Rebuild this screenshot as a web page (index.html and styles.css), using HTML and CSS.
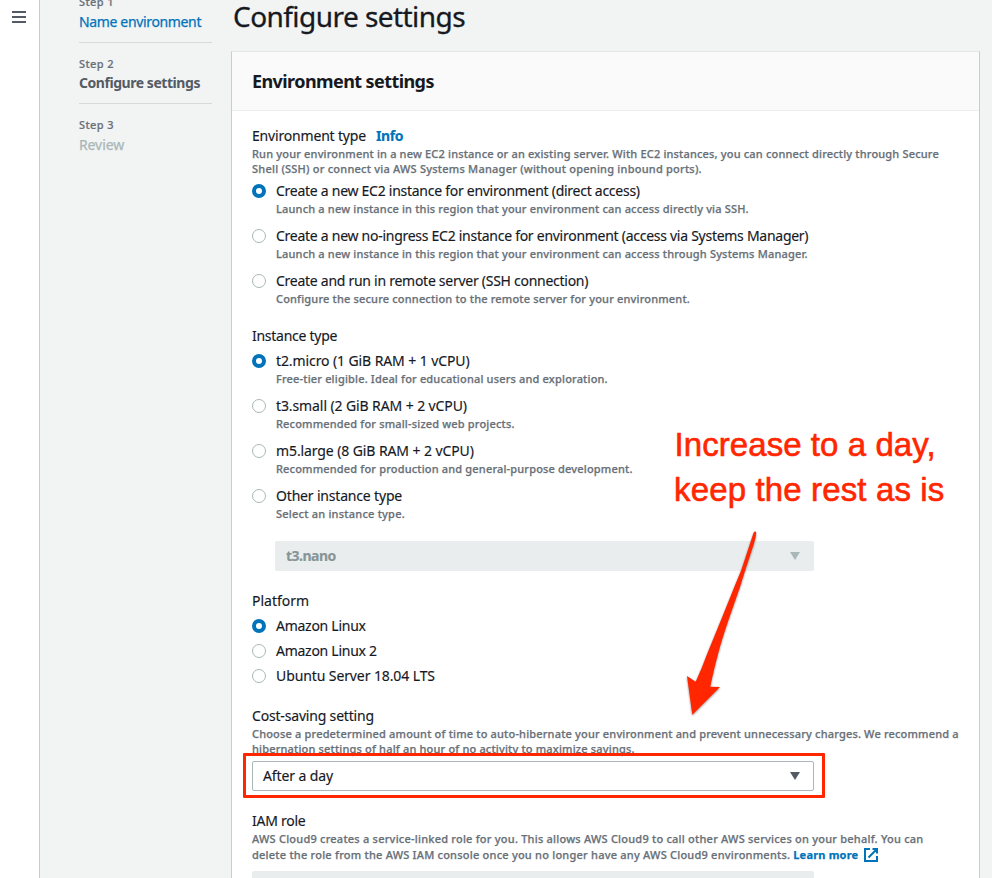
FILE: index.html
```
<!DOCTYPE html>
<html lang="en">
<head>
<meta charset="utf-8">
<title>Configure settings</title>
<link rel="stylesheet" href="styles.css">
</head>
<body>
<div class="app">
  <aside class="rail">
    <svg class="menu" width="14" height="12" viewBox="0 0 14 12"><path d="M0 1h14M0 6h14M0 11h14" stroke="#545b64" stroke-width="2"/></svg>
  </aside>
  <nav class="steps">
    <div class="step"><div class="step-no">Step 1</div><div class="step-name link">Name environment</div></div>
    <div class="step"><div class="step-no">Step 2</div><div class="step-name current">Configure settings</div></div>
    <div class="step"><div class="step-no">Step 3</div><div class="step-name future">Review</div></div>
  </nav>
  <main class="main">
    <h1 class="title">Configure settings</h1>
    <section class="card">
      <header class="card-head"><h2>Environment settings</h2></header>
      <div class="card-body">
        <div class="group">
          <div class="label">Environment type<a class="info">Info</a></div>
          <div class="desc">Run your environment in a new EC2 instance or an existing server. With EC2 instances, you can connect directly through Secure<br><span class="wide">Shell (SSH) or connect via AWS Systems Manager (without opening inbound ports).</span></div>
          <div class="options">
            <div class="option"><i class="radio on"></i><div><div class="label tight">Create a new EC2 instance for environment (direct access)</div><div class="desc">Launch a new instance in this region that your environment can access directly via SSH.</div></div></div>
            <div class="option"><i class="radio"></i><div><div class="label tight">Create a new no-ingress EC2 instance for environment (access via Systems Manager)</div><div class="desc">Launch a new instance in this region that your environment can access through Systems Manager.</div></div></div>
            <div class="option"><i class="radio"></i><div><div class="label tight">Create and run in remote server (SSH connection)</div><div class="desc">Configure the secure connection to the remote server for your environment.</div></div></div>
          </div>
        </div>
        <div class="group">
          <div class="label tight">Instance type</div>
          <div class="options">
            <div class="option"><i class="radio on"></i><div><div class="label spec">t2.micro (1 GiB RAM + 1 vCPU)</div><div class="desc">Free-tier eligible. Ideal for educational users and exploration.</div></div></div>
            <div class="option"><i class="radio"></i><div><div class="label spec">t3.small (2 GiB RAM + 2 vCPU)</div><div class="desc">Recommended for small-sized web projects.</div></div></div>
            <div class="option"><i class="radio"></i><div><div class="label spec">m5.large (8 GiB RAM + 2 vCPU)</div><div class="desc">Recommended for production and general-purpose development.</div></div></div>
            <div class="option"><i class="radio"></i><div><div class="label">Other instance type</div><div class="desc wide">Select an instance type.</div></div></div>
          </div>
          <div class="select disabled nested"><span>t3.nano</span><svg width="10" height="8" viewBox="0 0 10 8"><path d="M0 0h10L5 8z" fill="#aab7b8"/></svg></div>
        </div>
        <div class="group">
          <div class="label platform">Platform</div>
          <div class="options compact">
            <div class="option"><i class="radio on"></i><div class="label tight">Amazon Linux</div></div>
            <div class="option"><i class="radio"></i><div class="label tight">Amazon Linux 2</div></div>
            <div class="option"><i class="radio"></i><div class="label spec">Ubuntu Server 18.04 LTS</div></div>
          </div>
        </div>
        <div class="group">
          <div class="label">Cost-saving setting</div>
          <div class="desc">Choose a predetermined amount of time to auto-hibernate your environment and prevent unnecessary charges. We recommend a<br>hibernation settings of half an hour of no activity to maximize savings.</div>
          <div class="select"><span class="spec">After a day</span><svg width="10" height="8" viewBox="0 0 10 8"><path d="M0 0h10L5 8z" fill="#545b64"/></svg><div class="highlight"></div></div>
        </div>
        <div class="group">
          <div class="label tight">IAM role</div>
          <div class="desc wide">AWS Cloud9 creates a service-linked role for you. This allows AWS Cloud9 to call other AWS services on your behalf. You can</div>
          <div class="desc wide last">delete the role from the AWS IAM console once you no longer have any AWS Cloud9 environments.<a class="learn">Learn more</a><svg width="14" height="14" viewBox="0 0 14 14" fill="none" stroke="#0073bb" stroke-width="2"><path d="M6 1H1v12h12V8M8.5 1H13v4.5M13 1L4.5 9.5"/></svg></div>
          <div class="select disabled"></div>
        </div>
      </div>
    </section>
  </main>
  <div class="note">Increase to a day,<br><span class="note-second">keep the rest as is</span></div>
  <svg class="arrow" width="80" height="195" viewBox="0 0 80 195"><path d="M73.500 3Q75 .5 76.200 2.500Q76 7 73.500 15L65.300 40L60 57L48.500 90Q42 109 38.300 123Q33 143 30.300 156.700L40 157L12.300 184.700L7 146L15.700 151.700Q22 138 27.500 123L41 90L54.300 57L61.300 40Z" fill="#ff2600"/></svg>
</div>
</body>
</html>
```
FILE: styles.css
```
* { box-sizing: border-box; }
body { margin: 0; height: 878px; overflow: hidden; font-family: "Noto Sans", sans-serif; font-size: 14px; letter-spacing: -.18px; color: #16191f; background: #f2f3f3; white-space: nowrap; }
.app { position: relative; display: flex; height: 878px; overflow: hidden; }
.rail { width: 40px; flex: none; background: #fff; border-right: 1px solid #c8cccd; padding: 11px 0 0 12px; }
.menu { display: block; }
.steps { width: 133px; flex: none; margin: -8px 19px 0 39px; }
.step { height: 61px; }
.step + .step { border-top: 1px solid #d5dbdb; padding-top: 11px; }
.step:first-child { height: 50px; }
.step-no { font-size: 11px; font-weight: 500; line-height: 20px; letter-spacing: .4px; color: #687078; -webkit-text-stroke: .2px; }
.step-name { line-height: 20px; }
.step + .step .step-name { line-height: 18px; }
.step + .step + .step .step-name { line-height: 20px; }
.link { color: #0073bb; letter-spacing: -.35px; -webkit-text-stroke: .25px; }
.current { font-weight: 700; letter-spacing: -.45px; color: #545b64; }
.future { color: #aab7b8; letter-spacing: -.1px; -webkit-text-stroke: .25px; }
.main { width: 749px; flex: none; }
.title { margin: 0; padding-left: 2px; font-size: 28px; font-weight: 400; line-height: 33px; height: 51px; letter-spacing: -.55px; -webkit-text-stroke: .3px; }
.card { background: #fff; border: 1px solid #c9cdce; border-top-color: #e3e6e6; height: 900px; }
.card-head { height: 59px; background: #fafafa; border-bottom: 1px solid #eaeded; padding: 0 20px; }
.card-head h2 { margin: 0; font-size: 18px; line-height: 58px; letter-spacing: -.58px; }
.card-body { padding: 15px 20px; display: flex; flex-direction: column; gap: 20px; }
.label { line-height: 20px; -webkit-text-stroke: .15px; }
.label.tight { letter-spacing: -.27px; }
.spec { letter-spacing: -.1px; }
.label.platform { letter-spacing: 0; }
.info { margin-left: 10px; font-weight: 700; letter-spacing: -.4px; color: #0073bb; }
.desc { font-size: 11px; font-weight: 500; line-height: 15px; letter-spacing: .172px; color: #687078; -webkit-text-stroke: .25px; }
.wide { letter-spacing: .225px; }
.options { display: flex; flex-direction: column; gap: 10px; margin-top: 5px; }
.compact { gap: 5px; }
.option { display: flex; gap: 10px; }
.radio { width: 14px; height: 14px; margin-top: 3px; border: 1px solid #aab7b8; border-radius: 50%; background: #fff; flex: none; }
.radio.on { border: 4px solid #0073bb; }
.select { position: relative; display: flex; align-items: center; justify-content: space-between; height: 30px; width: 562px; margin-top: 5px; padding: 0 13px 0 10px; border: 1px solid #aab7b8; border-radius: 2px; line-height: 18px; -webkit-text-stroke: .15px; }
.select span { margin-top: -1px; }
.disabled { border-color: #eaeded; background: #eaeded; color: #879596; font-weight: 700; letter-spacing: -.5px; }
.nested { width: 539px; margin: 20px 0 0 23px; }
.highlight { position: absolute; left: -10px; top: -9px; width: 582px; height: 45px; border: 3px solid #ff2600; border-radius: 1px; }
.learn { margin: 0 6px 0 3px; font-weight: 700; letter-spacing: .2px; color: #0073bb; }
.last { display: flex; align-items: center; height: 17px; margin-bottom: 8px; }
.note { position: absolute; left: 674.5px; top: 422px; font: 33px/45px "Liberation Sans", Arial, sans-serif; letter-spacing: .07px; color: #ff2600; -webkit-text-stroke: .6px; }
.note-second { margin-left: -.5px; letter-spacing: .14px; }
.arrow { position: absolute; left: 680px; top: 530px; filter: drop-shadow(0 1px 1px rgba(0, 0, 0, .45)); }
```
